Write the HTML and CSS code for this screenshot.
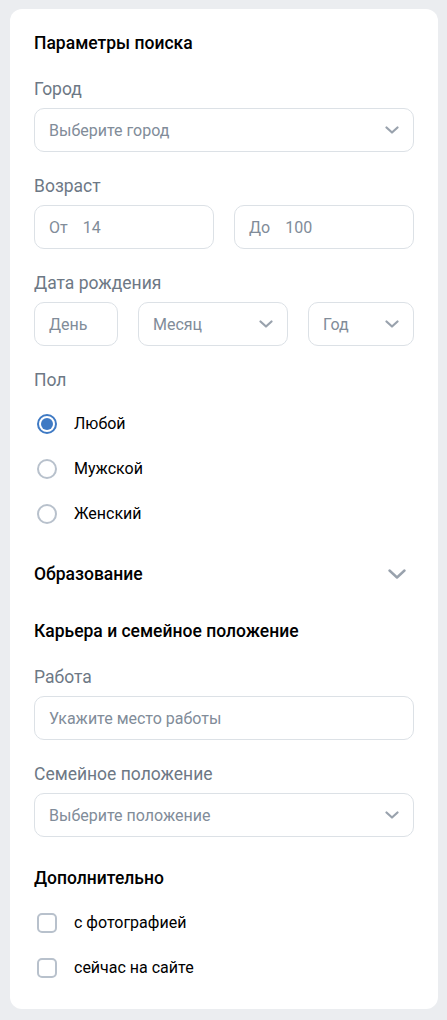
FILE: index.html
```html
<!DOCTYPE html>
<html lang="ru">
<head>
<meta charset="utf-8">
<link rel="stylesheet" href="styles.css">
</head>
<body>
<div class="card">
  <h2 class="title">Параметры поиска</h2>

  <div class="label">Город</div>
  <div class="field select"><span class="ph">Выберите город</span><svg class="chev" width="14" height="8" viewBox="0 0 14 8"><path d="M1.5 1.5L7 6.5L12.5 1.5" fill="none" stroke="#99a2ad" stroke-width="2.2" stroke-linecap="round" stroke-linejoin="round"/></svg></div>

  <div class="label">Возраст</div>
  <div class="row two">
    <div class="field"><span class="ph">От</span><span class="val">14</span></div>
    <div class="field"><span class="ph">До</span><span class="val">100</span></div>
  </div>

  <div class="label">Дата рождения</div>
  <div class="row date">
    <div class="field"><span class="ph">День</span></div>
    <div class="field select"><span class="ph">Месяц</span><svg class="chev" width="14" height="8" viewBox="0 0 14 8"><path d="M1.5 1.5L7 6.5L12.5 1.5" fill="none" stroke="#99a2ad" stroke-width="2.2" stroke-linecap="round" stroke-linejoin="round"/></svg></div>
    <div class="field select"><span class="ph">Год</span><svg class="chev" width="14" height="8" viewBox="0 0 14 8"><path d="M1.5 1.5L7 6.5L12.5 1.5" fill="none" stroke="#99a2ad" stroke-width="2.2" stroke-linecap="round" stroke-linejoin="round"/></svg></div>
  </div>

  <div class="label">Пол</div>
  <div class="radios">
    <div class="opt"><span class="radio checked"></span><span>Любой</span></div>
    <div class="opt"><span class="radio"></span><span>Мужской</span></div>
    <div class="opt"><span class="radio"></span><span>Женский</span></div>
  </div>

  <div class="section collapsible"><span>Образование</span><svg class="chev big" width="18" height="10" viewBox="0 0 18 10"><path d="M1.5 1.5L9 8.5L16.5 1.5" fill="none" stroke="#99a2ad" stroke-width="2.4" stroke-linecap="round" stroke-linejoin="round"/></svg></div>

  <div class="section">Карьера и семейное положение</div>

  <div class="label">Работа</div>
  <div class="field"><span class="ph">Укажите место работы</span></div>

  <div class="label">Семейное положение</div>
  <div class="field select"><span class="ph">Выберите положение</span><svg class="chev" width="14" height="8" viewBox="0 0 14 8"><path d="M1.5 1.5L7 6.5L12.5 1.5" fill="none" stroke="#99a2ad" stroke-width="2.2" stroke-linecap="round" stroke-linejoin="round"/></svg></div>

  <div class="section extra">Дополнительно</div>
  <div class="checks">
    <div class="opt"><span class="check"></span><span>с фотографией</span></div>
    <div class="opt"><span class="check"></span><span>сейчас на сайте</span></div>
  </div>
</div>
</body>
</html>
```

FILE: styles.css
```css
* { box-sizing: border-box; }
html, body { margin: 0; padding: 0; }
body {
  background: #ebedf0;
  font-family: Roboto, "Noto Sans", Arial, sans-serif;
  color: #000;
  padding: 9px 9px 11px 10px;
}
.card {
  background: #fff;
  border-radius: 12px;
  padding: 24px 24px 19px 24px;
  display: flex;
  flex-direction: column;
}
.title {
  margin: 0;
  font-size: 17.5px;
  font-weight: 500;
  line-height: 20px;
}
.label {
  font-size: 17.5px;
  line-height: 20px;
  color: #6d7885;
  margin-top: 26px;
  margin-bottom: 9px;
}
.field {
  height: 44px;
  border: 1px solid #dce1e6;
  border-radius: 10px;
  display: flex;
  align-items: center;
  padding: 0 14px;
  font-size: 16px;
  gap: 15px;
}
.ph { color: #818c99; }
.val { color: #818c99; }
.select { justify-content: space-between; }
.chev { flex: none; }
.row { display: flex; gap: 20px; }
.row + .label, .field + .label { margin-top: 24px; }
.two .field { flex: 1; }
.date .field:nth-child(1) { width: 84px; flex: none; }
.date .field:nth-child(2) { width: 150px; flex: none; }
.date .field:nth-child(3) { flex: 1; }
.radios, .checks { display: flex; flex-direction: column; }
.radios { margin-top: 2px; }
.opt {
  display: flex;
  align-items: center;
  height: 45px;
  font-size: 16px;
  gap: 17px;
  padding-left: 3px;
}
.radio {
  width: 20px; height: 20px;
  border-radius: 50%;
  border: 2px solid #b8c1cc;
  flex: none;
  position: relative;
}
.radio.checked {
  border-color: #3f7ac4;
}
.radio.checked::after {
  content: "";
  position: absolute;
  left: 2px; top: 2px;
  width: 12px; height: 12px;
  border-radius: 50%;
  background: #3f7ac4;
}
.section {
  font-size: 17.5px;
  font-weight: 500;
  line-height: 20px;
}
.collapsible {
  margin-top: 28px;
  display: flex;
  justify-content: space-between;
  align-items: center;
  padding-right: 8px;
}
.collapsible + .section { margin-top: 37px; }
.section + .label { margin-top: 26px; }
.extra { margin-top: 31px; }
.checks { margin-top: 12px; }
.check {
  width: 20px; height: 20px;
  border: 2px solid #b8c1cc;
  border-radius: 5px;
  flex: none;
}
.checks .opt { gap: 17px; }
```
